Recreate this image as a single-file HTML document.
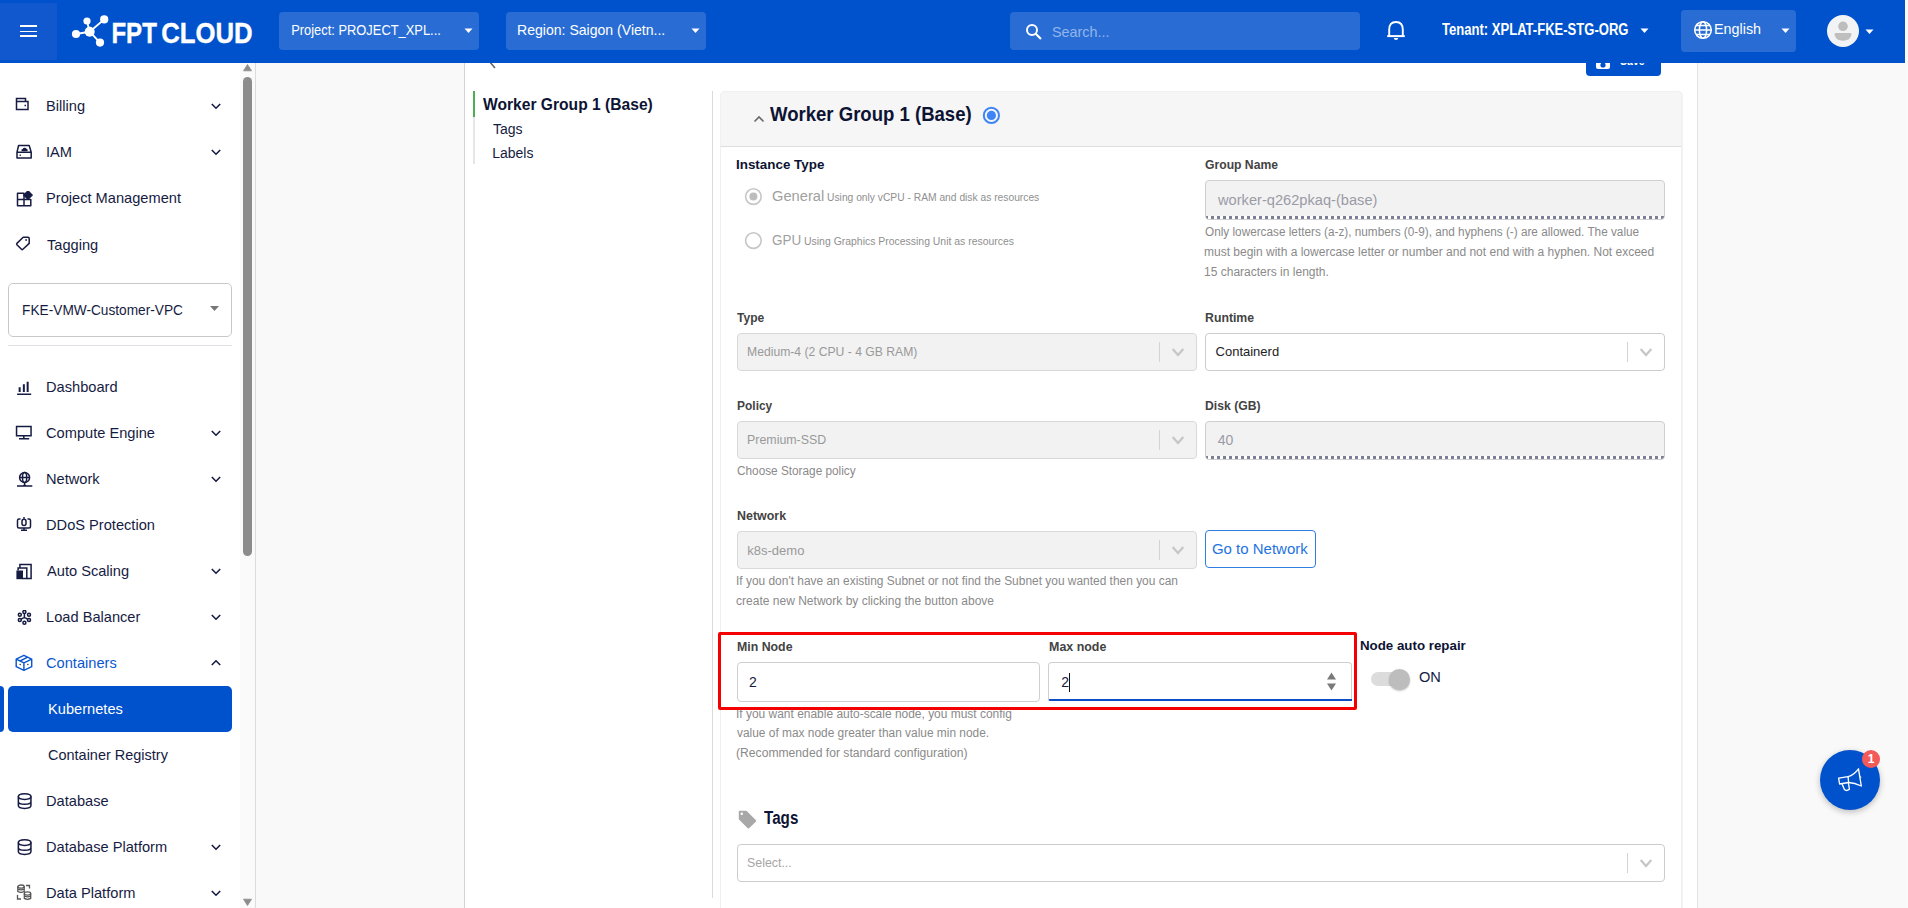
<!DOCTYPE html>
<html><head><meta charset="utf-8"><style>
html,body{margin:0;padding:0;width:1908px;height:908px;overflow:hidden;background:#f9f9f9;font-family:"Liberation Sans",sans-serif;}
.t{position:absolute;white-space:nowrap;}
</style></head><body>
<div style="position:absolute;left:256px;top:63px;width:1649px;height:845px;box-sizing:border-box;background:#f9f9f9"></div>
<div style="position:absolute;left:1905px;top:0px;width:3px;height:908px;box-sizing:border-box;background:#fafafa"></div>
<div style="position:absolute;left:464px;top:63px;width:1234px;height:845px;box-sizing:border-box;background:#fff;border-left:1px solid #d4d4d4;border-right:1px solid #e2e2e2"></div>
<svg style="position:absolute;left:484px;top:50px;" width="16" height="22" viewBox="0 0 16 22"><path d="M11 4 L5 11 L11 18" fill="none" stroke="#666" stroke-width="1.6"/></svg>
<div style="position:absolute;left:1586px;top:40px;width:75px;height:36px;box-sizing:border-box;background:#0052cc;border-radius:4px"></div>
<div style="position:absolute;left:1596px;top:55px;width:14px;height:14px;box-sizing:border-box;background:#fff;border-radius:2px"></div>
<svg style="position:absolute;left:1596px;top:55px;" width="14" height="14" viewBox="0 0 14 14"><circle cx="7" cy="10" r="2.6" fill="#0052cc"/></svg>
<div class="t" style="left:1619.63px;top:53px;font-size:13px;line-height:15px;color:#fff;font-weight:700;transform:scaleX(0.8125);transform-origin:0.37px 0;">Save</div>
<div style="position:absolute;left:473px;top:91px;width:2px;height:26px;box-sizing:border-box;background:#4caf50"></div>
<div style="position:absolute;left:473px;top:117px;width:2px;height:47px;box-sizing:border-box;background:#e6e6e6"></div>
<div class="t" style="left:482.78px;top:96px;font-size:16px;line-height:17px;color:#0d1333;font-weight:700;transform:scaleX(0.9760);transform-origin:0.02px 0;">Worker Group 1 (Base)</div>
<div class="t" style="left:492.99px;top:121px;font-size:14px;line-height:16px;color:#161b42;">Tags</div>
<div class="t" style="left:492.15px;top:145px;font-size:14px;line-height:16px;color:#161b42;">Labels</div>
<div style="position:absolute;left:712px;top:91px;width:1px;height:807px;box-sizing:border-box;background:#dadada"></div>
<div style="position:absolute;left:720px;top:91px;width:962px;height:869px;box-sizing:border-box;background:#fff;border:1px solid #efefef;border-radius:5px;box-shadow:1px 0 1px #f3f3f3"></div>
<div style="position:absolute;left:720px;top:91px;width:962px;height:56px;box-sizing:border-box;background:#f6f6f6;border:1px solid #f0f0f0;border-bottom:1px solid #dedede;border-radius:5px 5px 0 0"></div>
<svg style="position:absolute;left:752px;top:112px;" width="14" height="12" viewBox="0 0 14 12"><path d="M2.5 9.5 L7 5 L11.5 9.5" fill="none" stroke="#6b6b6b" stroke-width="1.7"/></svg>
<div class="t" style="left:770.48px;top:102px;font-size:20.5px;line-height:23px;color:#0d1333;font-weight:700;transform:scaleX(0.9047);transform-origin:0.02px 0;">Worker Group 1 (Base)</div>
<svg style="position:absolute;left:982px;top:106px;" width="19" height="19" viewBox="0 0 19 19"><circle cx="9.4" cy="9.4" r="7.6" fill="none" stroke="#3e84f6" stroke-width="2"/><circle cx="9.4" cy="9.4" r="4.6" fill="#3e84f6"/></svg>
<div class="t" style="left:735.83px;top:157px;font-size:13px;line-height:15px;color:#0d1333;font-weight:700;transform:scaleX(1.0307);transform-origin:0.87px 0;">Instance Type</div>
<svg style="position:absolute;left:744px;top:187px;" width="19" height="19" viewBox="0 0 19 19"><circle cx="9.4" cy="9.6" r="7.8" fill="none" stroke="#c6c6c6" stroke-width="1.6"/><circle cx="9.4" cy="9.6" r="4" fill="#bdbdbd"/></svg>
<div class="t" style="left:772.20px;top:188px;font-size:14px;line-height:16px;color:#a0a0a0;transform:scaleX(1.0485);transform-origin:0.70px 0;">General</div>
<div class="t" style="left:826.95px;top:191px;font-size:11px;line-height:12px;color:#8f8f8f;transform:scaleX(0.9330);transform-origin:0.85px 0;">Using only vCPU - RAM and disk as resources</div>
<svg style="position:absolute;left:744px;top:231px;" width="19" height="19" viewBox="0 0 19 19"><circle cx="9.4" cy="9.6" r="7.8" fill="none" stroke="#c6c6c6" stroke-width="1.6"/></svg>
<div class="t" style="left:772.20px;top:232px;font-size:14px;line-height:16px;color:#a0a0a0;transform:scaleX(0.9631);transform-origin:0.70px 0;">GPU</div>
<div class="t" style="left:804.15px;top:235px;font-size:11px;line-height:12px;color:#8f8f8f;transform:scaleX(0.9489);transform-origin:0.85px 0;">Using Graphics Processing Unit as resources</div>
<div class="t" style="left:1204.67px;top:157px;font-size:13px;line-height:15px;color:#434343;font-weight:700;transform:scaleX(0.9347);transform-origin:0.53px 0;">Group Name</div>
<div style="position:absolute;left:1205px;top:180px;width:460px;height:40px;box-sizing:border-box;background:#f2f2f2;border:1px solid #cfcfcf;border-radius:4px;overflow:hidden"><div style="position:absolute;left:0;right:0;bottom:0;height:3px;background:repeating-linear-gradient(90deg,#7b7f96 0 3px,#fff 3px 6px);background-position:-1px 0"></div></div>
<div class="t" style="left:1217.82px;top:192px;font-size:14px;line-height:16px;color:#9b9ba6;transform:scaleX(1.0451);transform-origin:-0.02px 0;">worker-q262pkaq-(base)</div>
<div class="t" style="left:1205.23px;top:225px;font-size:12px;line-height:14px;color:#8a8a8a;transform:scaleX(0.9807);transform-origin:0.57px 0;">Only lowercase letters (a-z), numbers (0-9), and hyphens (-) are allowed. The value</div>
<div class="t" style="left:1204.20px;top:245px;font-size:12px;line-height:14px;color:#8a8a8a;transform:scaleX(0.9999);transform-origin:0.80px 0;">must begin with a lowercase letter or number and not end with a hyphen. Not exceed</div>
<div class="t" style="left:1204.09px;top:265px;font-size:12px;line-height:14px;color:#8a8a8a;">15 characters in length.</div>
<div class="t" style="left:737.15px;top:310px;font-size:13px;line-height:15px;color:#434343;font-weight:700;transform:scaleX(0.9276);transform-origin:0.15px 0;">Type</div>
<div style="position:absolute;left:737px;top:333px;width:460px;height:38px;box-sizing:border-box;background:#f2f2f2;border:1px solid #d9d9d9;border-radius:4px"></div>
<div style="position:absolute;left:1159px;top:342px;width:1px;height:20px;box-sizing:border-box;background:#d3d3d3"></div>
<svg style="position:absolute;left:1169.5px;top:346px;" width="16" height="12" viewBox="0 0 16 12"><path d="M2.7 3.0 L8 9.0 L13.3 3.0" fill="none" stroke="#c6c6c6" stroke-width="2.2"/></svg>
<div class="t" style="left:747.13px;top:344px;font-size:13px;line-height:15px;color:#999;transform:scaleX(0.9353);transform-origin:1.07px 0;">Medium-4 (2 CPU - 4 GB RAM)</div>
<div class="t" style="left:1204.93px;top:310px;font-size:13px;line-height:15px;color:#434343;font-weight:700;transform:scaleX(0.9431);transform-origin:0.87px 0;">Runtime</div>
<div style="position:absolute;left:1205px;top:333px;width:460px;height:38px;box-sizing:border-box;background:#fff;border:1px solid #cccccc;border-radius:4px"></div>
<div style="position:absolute;left:1627px;top:342px;width:1px;height:20px;box-sizing:border-box;background:#d3d3d3"></div>
<svg style="position:absolute;left:1637.5px;top:346px;" width="16" height="12" viewBox="0 0 16 12"><path d="M2.7 3.0 L8 9.0 L13.3 3.0" fill="none" stroke="#c6c6c6" stroke-width="2.2"/></svg>
<div class="t" style="left:1215.54px;top:344px;font-size:13px;line-height:15px;color:#222;">Containerd</div>
<div class="t" style="left:737.13px;top:398px;font-size:13px;line-height:15px;color:#434343;font-weight:700;transform:scaleX(0.9182);transform-origin:0.87px 0;">Policy</div>
<div style="position:absolute;left:737px;top:421px;width:460px;height:38px;box-sizing:border-box;background:#f2f2f2;border:1px solid #d9d9d9;border-radius:4px"></div>
<div style="position:absolute;left:1159px;top:430px;width:1px;height:20px;box-sizing:border-box;background:#d3d3d3"></div>
<svg style="position:absolute;left:1169.5px;top:434px;" width="16" height="12" viewBox="0 0 16 12"><path d="M2.7 3.0 L8 9.0 L13.3 3.0" fill="none" stroke="#c6c6c6" stroke-width="2.2"/></svg>
<div class="t" style="left:747.13px;top:432px;font-size:13px;line-height:15px;color:#999;transform:scaleX(0.9524);transform-origin:1.07px 0;">Premium-SSD</div>
<div class="t" style="left:736.69px;top:464px;font-size:12px;line-height:14px;color:#8a8a8a;transform:scaleX(0.9825);transform-origin:0.61px 0;">Choose Storage policy</div>
<div class="t" style="left:1204.93px;top:398px;font-size:13px;line-height:15px;color:#434343;font-weight:700;transform:scaleX(0.9357);transform-origin:0.87px 0;">Disk (GB)</div>
<div style="position:absolute;left:1205px;top:421px;width:460px;height:39px;box-sizing:border-box;background:#f2f2f2;border:1px solid #cfcfcf;border-radius:4px;overflow:hidden"><div style="position:absolute;left:0;right:0;bottom:0;height:3px;background:repeating-linear-gradient(90deg,#7b7f96 0 3px,#fff 3px 6px);background-position:-1px 0"></div></div>
<div class="t" style="left:1217.68px;top:432px;font-size:14px;line-height:16px;color:#9b9ba6;">40</div>
<div class="t" style="left:737.03px;top:508px;font-size:13px;line-height:15px;color:#434343;font-weight:700;transform:scaleX(0.9558);transform-origin:0.87px 0;">Network</div>
<div style="position:absolute;left:737px;top:531px;width:460px;height:38px;box-sizing:border-box;background:#f2f2f2;border:1px solid #d9d9d9;border-radius:4px"></div>
<div style="position:absolute;left:1159px;top:540px;width:1px;height:20px;box-sizing:border-box;background:#d3d3d3"></div>
<svg style="position:absolute;left:1169.5px;top:544px;" width="16" height="12" viewBox="0 0 16 12"><path d="M2.7 3.0 L8 9.0 L13.3 3.0" fill="none" stroke="#c6c6c6" stroke-width="2.2"/></svg>
<div class="t" style="left:747.32px;top:543px;font-size:13px;line-height:15px;color:#999;">k8s-demo</div>
<div class="t" style="left:735.89px;top:574px;font-size:12px;line-height:14px;color:#8a8a8a;transform:scaleX(0.9939);transform-origin:1.11px 0;">If you don't have an existing Subnet or not find the Subnet you wanted then you can</div>
<div class="t" style="left:736.49px;top:594px;font-size:12px;line-height:14px;color:#8a8a8a;transform:scaleX(1.0023);transform-origin:0.51px 0;">create new Network by clicking the button above</div>
<div style="position:absolute;left:1205px;top:530px;width:111px;height:38px;box-sizing:border-box;border:1px solid #2f7de1;border-radius:4px;background:#fff"></div>
<div class="t" style="left:1211.80px;top:541px;font-size:14px;line-height:16px;color:#1f73e0;transform:scaleX(1.0700);transform-origin:0.70px 0;">Go to Network</div>
<div class="t" style="left:737.13px;top:639px;font-size:13px;line-height:15px;color:#434343;font-weight:700;transform:scaleX(0.9480);transform-origin:0.87px 0;">Min Node</div>
<div style="position:absolute;left:737px;top:662px;width:303px;height:40px;box-sizing:border-box;background:#fff;border:1px solid #cfcfcf;border-radius:4px"></div>
<div class="t" style="left:748.90px;top:674px;font-size:14px;line-height:16px;color:#161b42;">2</div>
<div class="t" style="left:1048.53px;top:639px;font-size:13px;line-height:15px;color:#434343;font-weight:700;transform:scaleX(0.9551);transform-origin:0.87px 0;">Max node</div>
<div style="position:absolute;left:1048px;top:662px;width:304px;height:39px;box-sizing:border-box;background:#fff;border:1px solid #cfcfcf;border-bottom:none;border-radius:4px 4px 0 0"></div>
<div style="position:absolute;left:1048.5px;top:699px;width:303.5px;height:2px;box-sizing:border-box;background:#0d4ec8;border-radius:0 0 0 1px"></div>
<div class="t" style="left:1061.30px;top:674px;font-size:14px;line-height:16px;color:#161b42;">2</div>
<div style="position:absolute;left:1069px;top:673px;width:1px;height:19px;box-sizing:border-box;background:#111"></div>
<svg style="position:absolute;left:1325px;top:670px;" width="14" height="24" viewBox="0 0 14 24"><path d="M2 9.5 L6.5 2.5 L11 9.5 Z" fill="#7a7a7a"/><path d="M2 13.5 L6.5 20.5 L11 13.5 Z" fill="#7a7a7a"/></svg>
<div class="t" style="left:735.89px;top:707px;font-size:12px;line-height:14px;color:#8a8a8a;transform:scaleX(0.9966);transform-origin:1.11px 0;">If you want enable auto-scale node, you must config</div>
<div class="t" style="left:736.96px;top:726px;font-size:12px;line-height:14px;color:#8a8a8a;transform:scaleX(0.9921);transform-origin:0.04px 0;">value of max node greater than value min node.</div>
<div class="t" style="left:736.26px;top:746px;font-size:12px;line-height:14px;color:#8a8a8a;transform:scaleX(1.0120);transform-origin:0.74px 0;">(Recommended for standard configuration)</div>
<div style="position:absolute;left:718px;top:632px;width:639px;height:78px;box-sizing:border-box;border:3px solid #f40000;border-radius:2px"></div>
<div class="t" style="left:1359.93px;top:638px;font-size:13px;line-height:15px;color:#0d1333;font-weight:700;transform:scaleX(1.0242);transform-origin:0.87px 0;">Node auto repair</div>
<div style="position:absolute;left:1371px;top:672px;width:33px;height:14px;box-sizing:border-box;background:#dcdcdc;border-radius:7px"></div>
<div style="position:absolute;left:1388.5px;top:668.5px;width:21px;height:21px;border-radius:50%;background:#bdbdbd;box-shadow:0 1px 2px rgba(0,0,0,.25)"></div>
<div class="t" style="left:1419.14px;top:669px;font-size:14px;line-height:16px;color:#161b42;transform:scaleX(1.0419);transform-origin:0.66px 0;">ON</div>
<svg style="position:absolute;left:736px;top:808px;" width="22" height="22" viewBox="0 0 22 22"><path d="M3.4 3.4 H10.3 L19.3 12.4 Q19.8 12.9 19.3 13.4 L12.9 19.6 Q12.4 20.1 11.9 19.6 L3.4 11.1 Z" fill="#a8a8a8" stroke="#a8a8a8" stroke-width="1.2" stroke-linejoin="round"/><circle cx="5.8" cy="5.8" r="1.25" fill="#fff"/></svg>
<div class="t" style="left:763.70px;top:808px;font-size:18px;line-height:20px;color:#0d1333;font-weight:700;transform:scaleX(0.8432);transform-origin:0.20px 0;">Tags</div>
<div style="position:absolute;left:737px;top:844px;width:928px;height:38px;box-sizing:border-box;background:#fff;border:1px solid #cccccc;border-radius:4px"></div>
<div style="position:absolute;left:1627px;top:853px;width:1px;height:20px;box-sizing:border-box;background:#d3d3d3"></div>
<svg style="position:absolute;left:1637.5px;top:857px;" width="16" height="12" viewBox="0 0 16 12"><path d="M2.7 3.0 L8 9.0 L13.3 3.0" fill="none" stroke="#c6c6c6" stroke-width="2.2"/></svg>
<div class="t" style="left:747.03px;top:856px;font-size:12.5px;line-height:14px;color:#a6a6a6;transform:scaleX(0.9897);transform-origin:0.57px 0;">Select...</div>
<div style="position:absolute;left:1820px;top:750px;width:60px;height:60px;border-radius:50%;background:#0052cc;box-shadow:0 2px 6px rgba(0,0,0,.25)"></div>
<svg style="position:absolute;left:1836px;top:766px;" width="28" height="28" viewBox="0 0 28 28"><g fill="none" stroke="#fff" stroke-width="1.35" stroke-linejoin="round"><path d="M2.6 12.1 L12.1 10.6 L12.6 16.5 L3.6 18 Z"/><path d="M12.1 10.6 Q18 9 22.5 2.8 L25.3 20 Q18.5 16.8 12.6 16.5"/><path d="M6.1 18 L8.4 23.6 Q10.5 25.6 13.4 23.2 L12.4 17"/><path d="M24.2 11.2 L25.2 11"/></g></svg>
<div style="position:absolute;left:1862px;top:750px;width:18px;height:18px;border-radius:50%;background:#f25959;color:#fff;font-size:12px;font-weight:700;text-align:center;line-height:18px">1</div>
<div style="position:absolute;left:0px;top:63px;width:240px;height:845px;box-sizing:border-box;background:#fff"></div>
<div style="position:absolute;left:240px;top:63px;width:15px;height:845px;box-sizing:border-box;background:#fafafa"></div>
<div style="position:absolute;left:255px;top:63px;width:1px;height:845px;box-sizing:border-box;background:#dcdcdc"></div>
<svg style="position:absolute;left:243px;top:63px;" width="9" height="9" viewBox="0 0 9 9"><path d="M0.5 7.8 L4.5 1.5 L8.5 7.8 Z" fill="#8c8c8c" stroke="#8c8c8c" stroke-width="0.8" stroke-linejoin="round"/></svg>
<div style="position:absolute;left:243px;top:77px;width:9px;height:479px;box-sizing:border-box;background:#8c8c8c;border-radius:4.5px"></div>
<svg style="position:absolute;left:243px;top:898px;" width="9" height="9" viewBox="0 0 9 9"><path d="M0.5 1.2 L4.5 7.5 L8.5 1.2 Z" fill="#8c8c8c" stroke="#8c8c8c" stroke-width="0.8" stroke-linejoin="round"/></svg>
<svg style="position:absolute;left:15px;top:97px;" width="18" height="18" viewBox="0 0 18 18"><path d="M1.5 4.5 H13 V12.5 H1.5 Z M1.5 4.5 V1.5 H10.5 V4.5" fill="none" stroke="#161b42" stroke-width="1.5"/><path d="M9.5 8.5 H11" fill="none" stroke="#161b42" stroke-width="1.5"/></svg>
<div class="t" style="left:45.97px;top:97px;font-size:15px;line-height:17px;color:#161b42;transform:scaleX(0.9750);transform-origin:1.23px 0;">Billing</div>
<svg style="position:absolute;left:210px;top:102.2px;" width="12" height="8" viewBox="0 0 12 8"><path d="M1.8 2 L6 6.2 L10.2 2" fill="none" stroke="#161b42" stroke-width="1.6"/></svg>
<svg style="position:absolute;left:15px;top:143.5px;" width="18" height="18" viewBox="0 0 18 18"><path d="M3.6 1.5 H14.2 L16.2 8.2 V14 H2 V8.2 Z M2 8.2 H16.2" fill="none" stroke="#161b42" stroke-width="1.5" stroke-linejoin="round"/><path d="M7.2 7.2 H11.6 Q12.7 7.2 12.7 6.2 Q12.7 5.2 11.6 5.1 Q11.3 3.7 9.6 3.7 Q8 3.7 7.8 5.1 Q6.4 5.2 6.4 6.2 Q6.4 7.2 7.2 7.2 Z" fill="#161b42"/><path d="M5.2 10.6 V12" stroke="#161b42" stroke-width="1.2"/></svg>
<div class="t" style="left:45.82px;top:143px;font-size:15px;line-height:17px;color:#161b42;transform:scaleX(0.9750);transform-origin:1.38px 0;">IAM</div>
<svg style="position:absolute;left:210px;top:148.3px;" width="12" height="8" viewBox="0 0 12 8"><path d="M1.8 2 L6 6.2 L10.2 2" fill="none" stroke="#161b42" stroke-width="1.6"/></svg>
<svg style="position:absolute;left:15px;top:190.5px;" width="18" height="18" viewBox="0 0 18 18"><path d="M2.5 2.3 H9 V8.5 H2.5 Z M2.5 8.5 V14.8 H9 V8.5 M9 8.5 H15.8 V14.8 H9" fill="none" stroke="#161b42" stroke-width="1.5" stroke-linejoin="round"/><path d="M13 -0.2 L17.3 4.1 L13 8.4 L8.7 4.1 Z" fill="#161b42" stroke="#161b42" stroke-width="1.2" stroke-linejoin="round"/></svg>
<div class="t" style="left:45.97px;top:189px;font-size:15px;line-height:17px;color:#161b42;transform:scaleX(0.9750);transform-origin:1.23px 0;">Project Management</div>
<svg style="position:absolute;left:15px;top:236px;" width="18" height="18" viewBox="0 0 18 18"><path d="M8.2 1.3 H13 Q14.2 1.3 14.2 2.5 V7.4 L7.9 13.3 Q7.2 13.9 6.5 13.3 L1.9 8.7 Q1.3 8 1.9 7.4 Z" fill="none" stroke="#161b42" stroke-width="1.5" stroke-linejoin="round"/><rect x="10.3" y="3.2" width="1.6" height="1.6" fill="#161b42"/></svg>
<div class="t" style="left:46.86px;top:236px;font-size:15px;line-height:17px;color:#161b42;transform:scaleX(0.9750);transform-origin:0.34px 0;">Tagging</div>
<svg style="position:absolute;left:16px;top:381px;" width="18" height="18" viewBox="0 0 18 18"><path d="M3.65 6.2 V11 M7.85 3.3 V11 M11.65 0.7 V11" fill="none" stroke="#161b42" stroke-width="2"/><path d="M1.1 13.25 H15.2" fill="none" stroke="#161b42" stroke-width="1.5" stroke-width="1.4"/></svg>
<div class="t" style="left:45.97px;top:378px;font-size:15px;line-height:17px;color:#161b42;transform:scaleX(0.9750);transform-origin:1.23px 0;">Dashboard</div>
<svg style="position:absolute;left:15px;top:424.5px;" width="18" height="18" viewBox="0 0 18 18"><path d="M1.55 1.45 H16.05 V10.75 H1.55 Z M8.8 10.75 V13 M4 13.75 H14.2" fill="none" stroke="#161b42" stroke-width="1.5"/></svg>
<div class="t" style="left:46.44px;top:424px;font-size:15px;line-height:17px;color:#161b42;transform:scaleX(0.9750);transform-origin:0.76px 0;">Compute Engine</div>
<svg style="position:absolute;left:210px;top:429px;" width="12" height="8" viewBox="0 0 12 8"><path d="M1.8 2 L6 6.2 L10.2 2" fill="none" stroke="#161b42" stroke-width="1.6"/></svg>
<svg style="position:absolute;left:15.5px;top:471px;" width="18" height="18" viewBox="0 0 18 18"><circle cx="8.6" cy="6.5" r="5" fill="none" stroke="#161b42" stroke-width="1.5"/><ellipse cx="8.6" cy="6.5" rx="2.1" ry="5" fill="none" stroke="#161b42" stroke-width="1.5" stroke-width="1.3"/><path d="M3.6 6.5 H13.6 M8.6 11.5 V13.2 Q8.6 15 6.6 15 M8.6 13.2 Q8.6 15 10.6 15 M1 15.1 H16.3" fill="none" stroke="#161b42" stroke-width="1.5" stroke-width="1.3"/></svg>
<div class="t" style="left:45.97px;top:470px;font-size:15px;line-height:17px;color:#161b42;transform:scaleX(0.9750);transform-origin:1.23px 0;">Network</div>
<svg style="position:absolute;left:210px;top:475px;" width="12" height="8" viewBox="0 0 12 8"><path d="M1.8 2 L6 6.2 L10.2 2" fill="none" stroke="#161b42" stroke-width="1.6"/></svg>
<svg style="position:absolute;left:16px;top:516.2px;" width="18" height="18" viewBox="0 0 18 18"><path d="M4.5 3 H3 Q1.5 3 1.5 4.5 V10.5 Q1.5 12 3 12 H13 Q14.5 12 14.5 10.5 V4.5 Q14.5 3 13 3 H11.5 M8 12 V14 M5 14.3 H11" fill="none" stroke="#161b42" stroke-width="1.5"/><rect x="6" y="3.2" width="4" height="6.3" rx="2" fill="none" stroke="#161b42" stroke-width="1.5"/><path d="M8 1 V2.8" fill="none" stroke="#161b42" stroke-width="1.5"/></svg>
<div class="t" style="left:45.97px;top:516px;font-size:15px;line-height:17px;color:#161b42;transform:scaleX(0.9750);transform-origin:1.23px 0;">DDoS Protection</div>
<svg style="position:absolute;left:16px;top:562.5px;" width="18" height="18" viewBox="0 0 18 18"><path d="M3.9 5 V1.5 H15.1 V15.5 H10.8" fill="none" stroke="#161b42" stroke-width="1.5"/><path d="M2.1 7.6 V5.1 H10.8 V15.5 H6.5" fill="none" stroke="#161b42" stroke-width="1.5"/><rect x="0.4" y="7.5" width="6.6" height="8.7" fill="#161b42"/></svg>
<div class="t" style="left:47.17px;top:562px;font-size:15px;line-height:17px;color:#161b42;transform:scaleX(0.9750);transform-origin:0.03px 0;">Auto Scaling</div>
<svg style="position:absolute;left:210px;top:567px;" width="12" height="8" viewBox="0 0 12 8"><path d="M1.8 2 L6 6.2 L10.2 2" fill="none" stroke="#161b42" stroke-width="1.6"/></svg>
<svg style="position:absolute;left:16.5px;top:609.5px;" width="18" height="18" viewBox="0 0 18 18"><g fill="none" stroke="#161b42" stroke-width="1.5" stroke-width="1.3"><circle cx="7.4" cy="1.9" r="1.5"/><circle cx="2.8" cy="4.7" r="1.5"/><circle cx="12" cy="4.7" r="1.5"/><circle cx="2.8" cy="10.1" r="1.5"/><circle cx="12" cy="10.1" r="1.5"/><circle cx="7.4" cy="12.7" r="1.5"/><path d="M7.4 3.4 V7.7 M4.1 9.4 Q7.4 6.2 10.7 9.4" stroke-width="1.5"/></g></svg>
<div class="t" style="left:45.97px;top:608px;font-size:15px;line-height:17px;color:#161b42;transform:scaleX(0.9750);transform-origin:1.23px 0;">Load Balancer</div>
<svg style="position:absolute;left:210px;top:613px;" width="12" height="8" viewBox="0 0 12 8"><path d="M1.8 2 L6 6.2 L10.2 2" fill="none" stroke="#161b42" stroke-width="1.6"/></svg>
<div style="position:absolute;left:8px;top:283px;width:224px;height:54px;box-sizing:border-box;border:1px solid #c8c8c8;border-radius:5px;background:#fff"></div>
<div class="t" style="left:22.27px;top:301px;font-size:15px;line-height:17px;color:#161b42;transform:scaleX(0.9118);transform-origin:1.23px 0;">FKE-VMW-Customer-VPC</div>
<svg style="position:absolute;left:209px;top:305px;" width="11" height="7" viewBox="0 0 11 7"><path d="M1 1 L5.5 6 L10 1 Z" fill="#777"/></svg>
<div style="position:absolute;left:8px;top:345px;width:224px;height:1px;box-sizing:border-box;background:#e1e1e8"></div>
<svg style="position:absolute;left:15px;top:654px;" width="18" height="18" viewBox="0 0 18 18"><path d="M8.9 1.3 L16.7 5.2 V12.7 L8.9 16.3 L1.2 12.7 V5.2 Z M1.2 5.2 L8.9 8.8 L16.7 5.2 M8.9 8.8 V16.3 M12.7 3.2 L5 7" fill="none" stroke="#0b57d0" stroke-width="1.45" stroke-linejoin="round"/><circle cx="5.2" cy="10.4" r="0.75" fill="#333"/><circle cx="12.9" cy="10.4" r="0.75" fill="#333"/></svg>
<div class="t" style="left:46.44px;top:654px;font-size:15px;line-height:17px;color:#0b57d0;transform:scaleX(0.9750);transform-origin:0.76px 0;">Containers</div>
<svg style="position:absolute;left:210px;top:659.2px;" width="12" height="8" viewBox="0 0 12 8"><path d="M1.8 6 L6 1.8 L10.2 6" fill="none" stroke="#161b42" stroke-width="1.6"/></svg>
<div style="position:absolute;left:8px;top:686px;width:224px;height:46px;box-sizing:border-box;background:#0052cc;border-radius:5px"></div>
<div style="position:absolute;left:0px;top:686px;width:4px;height:46px;box-sizing:border-box;background:#0052cc;border-radius:0 4px 4px 0"></div>
<div class="t" style="left:47.77px;top:700px;font-size:15px;line-height:17px;color:#fff;transform:scaleX(0.9750);transform-origin:1.23px 0;">Kubernetes</div>
<div class="t" style="left:48.24px;top:746px;font-size:15px;line-height:17px;color:#161b42;transform:scaleX(0.9650);transform-origin:0.76px 0;">Container Registry</div>
<svg style="position:absolute;left:16.5px;top:792.5px;" width="18" height="18" viewBox="0 0 18 18"><ellipse cx="7.65" cy="3.6" rx="6.3" ry="2.8" fill="none" stroke="#161b42" stroke-width="1.5" stroke-width="1.8"/><path d="M1.35 3.6 V12.6 A6.3 2.8 0 0 0 13.95 12.6 V3.6 M1.35 8.4 A6.3 2.8 0 0 0 13.95 8.4" fill="none" stroke="#161b42" stroke-width="1.5" stroke-width="1.8"/></svg>
<div class="t" style="left:45.97px;top:792px;font-size:15px;line-height:17px;color:#161b42;transform:scaleX(0.9750);transform-origin:1.23px 0;">Database</div>
<svg style="position:absolute;left:16.5px;top:838.5px;" width="18" height="18" viewBox="0 0 18 18"><ellipse cx="7.65" cy="3.6" rx="6.3" ry="2.8" fill="none" stroke="#161b42" stroke-width="1.5" stroke-width="1.8"/><path d="M1.35 3.6 V12.6 A6.3 2.8 0 0 0 13.95 12.6 V3.6 M1.35 8.4 A6.3 2.8 0 0 0 13.95 8.4" fill="none" stroke="#161b42" stroke-width="1.5" stroke-width="1.8"/></svg>
<div class="t" style="left:45.97px;top:838px;font-size:15px;line-height:17px;color:#161b42;transform:scaleX(0.9750);transform-origin:1.23px 0;">Database Platform</div>
<svg style="position:absolute;left:210px;top:843.4px;" width="12" height="8" viewBox="0 0 12 8"><path d="M1.8 2 L6 6.2 L10.2 2" fill="none" stroke="#161b42" stroke-width="1.6"/></svg>
<svg style="position:absolute;left:15.5px;top:884px;" width="18" height="18" viewBox="0 0 18 18"><g fill="none" stroke="#555" stroke-width="1.3"><ellipse cx="5" cy="2.6" rx="3.2" ry="1.6"/><path d="M1.8 2.6 V7.5 Q5 9.3 8.2 7.5 V2.6 M1.8 5 Q5 6.8 8.2 5"/><ellipse cx="11.5" cy="9.5" rx="3.2" ry="1.6"/><path d="M8.3 9.5 V14.4 Q11.5 16.2 14.7 14.4 V9.5 M8.3 12 Q11.5 13.8 14.7 12"/><path d="M10 1.5 H13.5 V4.5 M1.5 11 V15 H5"/></g></svg>
<div class="t" style="left:45.97px;top:884px;font-size:15px;line-height:17px;color:#161b42;transform:scaleX(0.9750);transform-origin:1.23px 0;">Data Platform</div>
<svg style="position:absolute;left:210px;top:889.4px;" width="12" height="8" viewBox="0 0 12 8"><path d="M1.8 2 L6 6.2 L10.2 2" fill="none" stroke="#161b42" stroke-width="1.6"/></svg>
<div style="position:absolute;left:0px;top:0px;width:1905px;height:63px;box-sizing:border-box;background:#0052cc"></div>
<div style="position:absolute;left:0px;top:3px;width:57px;height:57px;box-sizing:border-box;background:#1158ce"></div>
<div style="position:absolute;left:20.3px;top:25.3px;width:16.3px;height:1.8999999999999986px;box-sizing:border-box;background:#fff"></div>
<div style="position:absolute;left:20.3px;top:30.5px;width:16.3px;height:1.8999999999999986px;box-sizing:border-box;background:#fff"></div>
<div style="position:absolute;left:20.3px;top:35px;width:16.3px;height:1.8999999999999986px;box-sizing:border-box;background:#fff"></div>
<svg style="position:absolute;left:70px;top:14px;" width="40" height="34" viewBox="0 0 40 34"><g fill="#fff" stroke="#fff" stroke-width="1.9"><path d="M19.7 17.7 L6 20 M19.7 17.7 L17 7 M19.7 17.7 L34.2 5.4 M19.7 17.7 L30 28.6"/></g><g fill="#fff"><circle cx="19.7" cy="17.7" r="5"/><circle cx="6" cy="20" r="4.1"/><circle cx="17" cy="7" r="3.6"/><circle cx="34.2" cy="5.4" r="4.1"/><circle cx="30" cy="28.6" r="4.1"/></g></svg>
<div class="t" style="left:111.41px;top:16px;font-size:29.8px;line-height:33px;color:#fff;font-weight:700;transform:scaleX(0.8079);transform-origin:1.99px 0;-webkit-text-stroke:0.4px #fff;">FPT</div>
<div class="t" style="left:161.28px;top:16px;font-size:29.8px;line-height:33px;color:#fff;font-weight:700;transform:scaleX(0.8631);transform-origin:1.22px 0;-webkit-text-stroke:0.4px #fff;">CLOUD</div>
<div style="position:absolute;left:279px;top:12px;width:200px;height:38px;box-sizing:border-box;background:rgba(255,255,255,0.16);border-radius:4px"></div>
<div class="t" style="left:290.61px;top:22px;font-size:14.5px;line-height:16px;color:#fff;transform:scaleX(0.8891);transform-origin:1.19px 0;">Project: PROJECT_XPL...</div>
<svg style="position:absolute;left:464px;top:27.5px;" width="9" height="5.5" viewBox="0 0 9 5.5"><path d="M0.5 0.5 L4.5 5.0 L8.5 0.5 Z" fill="#fff"/></svg>
<div style="position:absolute;left:506px;top:12px;width:200px;height:38px;box-sizing:border-box;background:rgba(255,255,255,0.16);border-radius:4px"></div>
<div class="t" style="left:517.31px;top:22px;font-size:14.5px;line-height:16px;color:#fff;transform:scaleX(0.9696);transform-origin:1.19px 0;">Region: Saigon (Vietn...</div>
<svg style="position:absolute;left:691px;top:27.5px;" width="9" height="5.5" viewBox="0 0 9 5.5"><path d="M0.5 0.5 L4.5 5.0 L8.5 0.5 Z" fill="#fff"/></svg>
<div style="position:absolute;left:1010px;top:12px;width:350px;height:38px;box-sizing:border-box;background:rgba(255,255,255,0.16);border-radius:4px"></div>
<svg style="position:absolute;left:1024px;top:22px;" width="20" height="20" viewBox="0 0 20 20"><circle cx="8" cy="8" r="5" fill="none" stroke="#fff" stroke-width="2"/><path d="M11.5 11.5 L17 17" stroke="#fff" stroke-width="2.2"/></svg>
<div class="t" style="left:1051.54px;top:24px;font-size:14.5px;line-height:16px;color:#93b4ec;transform:scaleX(0.9903);transform-origin:0.66px 0;">Search...</div>
<svg style="position:absolute;left:1384px;top:19px;" width="24" height="24" viewBox="0 0 24 24"><path d="M3.2 17.1 H20.8" stroke="#fff" stroke-width="2"/><path d="M5.2 17.1 V10.8 Q5.2 3 12 3 Q18.8 3 18.8 10.8 V17.1" fill="none" stroke="#fff" stroke-width="1.9"/><path d="M9.8 19 H14.2 Q14 20.9 12 20.9 Q10 20.9 9.8 19 Z" fill="#fff"/></svg>
<div class="t" style="left:1442.12px;top:21px;font-size:16px;line-height:17px;color:#fff;font-weight:700;transform:scaleX(0.8152);transform-origin:0.18px 0;">Tenant: XPLAT-FKE-STG-ORG</div>
<svg style="position:absolute;left:1639.5px;top:28px;" width="9" height="5.5" viewBox="0 0 9 5.5"><path d="M0.5 0.5 L4.5 5.0 L8.5 0.5 Z" fill="#fff"/></svg>
<div style="position:absolute;left:1681px;top:10px;width:115px;height:42px;box-sizing:border-box;background:rgba(255,255,255,0.16);border-radius:4px"></div>
<svg style="position:absolute;left:1693px;top:20px;" width="20" height="20" viewBox="0 0 20 20"><g fill="none" stroke="#fff" stroke-width="1.5"><circle cx="10" cy="10" r="8.3"/><ellipse cx="10" cy="10" rx="3.6" ry="8.3"/><path d="M1.7 10 H18.3 M3 5.5 H17 M3 14.5 H17"/></g></svg>
<div class="t" style="left:1713.71px;top:21px;font-size:14.5px;line-height:16px;color:#fff;transform:scaleX(0.9885);transform-origin:1.19px 0;">English</div>
<svg style="position:absolute;left:1780.5px;top:27.5px;" width="9" height="5.5" viewBox="0 0 9 5.5"><path d="M0.5 0.5 L4.5 5.0 L8.5 0.5 Z" fill="#fff"/></svg>
<div style="position:absolute;left:1827px;top:15px;width:32px;height:32px;border-radius:50%;background:#f2f3f5"></div>
<svg style="position:absolute;left:1827px;top:15px;" width="32" height="32" viewBox="0 0 32 32"><circle cx="16" cy="11.3" r="4.8" fill="#bdbdbd"/><path d="M8.6 18.1 H23.4 Q24.8 18.1 24.5 19.6 Q23.4 25.8 16 25.8 Q8.6 25.8 7.5 19.6 Q7.2 18.1 8.6 18.1 Z" fill="#bfbfbf"/></svg>
<svg style="position:absolute;left:1865.2px;top:29.3px;" width="9" height="5.5" viewBox="0 0 9 5.5"><path d="M0.5 0.5 L4.5 5.0 L8.5 0.5 Z" fill="#fff"/></svg>
</body></html>
